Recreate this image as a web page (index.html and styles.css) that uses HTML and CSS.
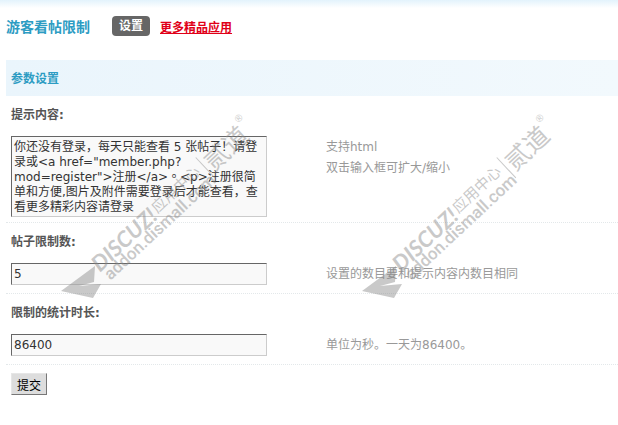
FILE: index.html
```html
<!DOCTYPE html>
<html lang="zh-CN">
<head>
    <meta charset="UTF-8">
    <meta name="viewport" content="width=device-width, initial-scale=1.0">
    <title>游客看帖限制</title>
    <link rel="stylesheet" href="styles.css">
</head>
<body>
    <div class="container">
        <div class="page-head">
            <h1 class="page-title">游客看帖限制</h1>
            <a href="#" class="tab-current">设置</a>
            <a href="#" class="more-link">更多精品应用</a>
        </div>

        <form class="settings-form">
            <h2 class="section-title">参数设置</h2>

            <div class="form-row">
                <label class="row-label" for="message">提示内容:</label>
                <div class="row-field">
                    <textarea class="text-box message-box" id="message">你还没有登录，每天只能查看 5 张帖子！请登录或&lt;a href="member.php?mod=register"&gt;注册&lt;/a&gt;。&lt;p&gt;注册很简单和方便,图片及附件需要登录后才能查看，查看更多精彩内容请登录</textarea>
                </div>
                <p class="row-hint">支持html<br>双击输入框可扩大/缩小</p>
            </div>

            <div class="form-row">
                <label class="row-label" for="limit">帖子限制数:</label>
                <div class="row-field">
                    <input type="text" class="text-box" id="limit" value="5">
                </div>
                <p class="row-hint">设置的数目要和提示内容内数目相同</p>
            </div>

            <div class="form-row">
                <label class="row-label" for="duration">限制的统计时长:</label>
                <div class="row-field">
                    <input type="text" class="text-box" id="duration" value="86400">
                </div>
                <p class="row-hint">单位为秒。一天为86400。</p>
            </div>

            <div class="form-actions">
                <button type="submit" class="submit-button">提交</button>
            </div>
        </form>
    </div>

    <svg class="watermark" width="562" height="200" viewBox="50 105 562 200" aria-hidden="true">
        <defs>
            <g id="mark">
                <path d="M61 291 L95 266 L94 282 L79 286 L101 284 L93 298 Z"/>
                <g transform="translate(110 273) rotate(-43)">
                    <text class="mark-brand" x="-7" y="-7">DISCUZ!</text>
                    <text class="mark-center" x="75" y="-11">应用中心</text>
                    <rect x="141" y="-26" width="1" height="28"/>
                    <text class="mark-name" x="145" y="-3">贰道</text>
                    <text class="mark-reg" x="196" y="-22">®</text>
                    <text class="mark-site" x="-5" y="6">addon.dismall.com</text>
                </g>
            </g>
        </defs>
        <use href="#mark"/>
        <use href="#mark" x="301"/>
    </svg>
</body>
</html>
```

FILE: styles.css
```css
* {
    margin: 0;
    padding: 0;
    box-sizing: border-box;
}

body {
    position: relative;
    background: #fff linear-gradient(#e3f3fc, #fff) no-repeat 0 0 / 100% 8px;
    font-family: "DejaVu Sans", "Noto Sans CJK TC", sans-serif;
    font-size: 12px;
    color: #333;
}

.container {
    padding: 8px 0 8px 6px;
}

.page-head {
    display: flex;
    align-items: center;
    height: 36px;
    margin-bottom: 16px;
}

.page-title {
    margin-right: 22px;
    font-size: 14px;
    font-weight: bold;
    color: #2d9cc3;
}

.tab-current {
    margin-right: 10px;
    padding: 0 7px;
    border-radius: 4px;
    background-color: #666;
    font-weight: bold;
    line-height: 20px;
    color: #fff;
    text-decoration: none;
}

.more-link {
    font-weight: bold;
    color: #e00018;
}

.section-title {
    padding: 2px 0 0 5px;
    background: linear-gradient(to right, #eaf5fc, #f2f9fd);
    font-size: 12px;
    line-height: 34px;
    color: #2d9cc3;
}

.form-row {
    display: grid;
    grid-template-columns: 320px 1fr;
    padding-bottom: 8px;
    border-bottom: 1px dotted #e3e8ea;
}

.form-row:has(.message-box) {
    padding-bottom: 5px;
}

.row-label {
    grid-column: 1 / -1;
    padding: 2px 0 0 5px;
    font-weight: bold;
    line-height: 34px;
    color: #555;
}

.row-field {
    padding: 4px 0 0 5px;
}

.text-box {
    display: block;
    width: 256px;
    height: 22px;
    padding: 0 2px;
    border: 1px solid;
    border-color: #666 #ccc #ccc #666;
    background-color: #f9f9f9;
    font: inherit;
    color: #333;
}

.message-box {
    height: 81px;
    padding-top: 3px;
    line-height: 15px;
    overflow: hidden;
    resize: none;
}

.row-hint {
    padding-top: 5px;
    line-height: 21px;
    color: #999;
}

.form-actions {
    padding: 8px 5px;
}

.submit-button {
    width: 36px;
    height: 22px;
    border: 1px solid;
    border-color: #e6e6e6 #777 #777 #e6e6e6;
    background-color: #ddd;
    font: inherit;
    color: #000;
}

/* stamp laid over the form */
.watermark {
    position: absolute;
    top: 105px;
    left: 50px;
    fill: #888;
    opacity: 0.45;
    pointer-events: none;
}

.mark-brand {
    font: italic bold 22px Lato, sans-serif;
}

.mark-center {
    font: 15px "Noto Sans CJK SC", sans-serif;
}

.mark-name {
    font: 25px "Noto Sans CJK SC", sans-serif;
}

.mark-reg {
    font: 10px "Liberation Sans", sans-serif;
}

.mark-site {
    font: 500 17px Roboto, sans-serif;
}
```
